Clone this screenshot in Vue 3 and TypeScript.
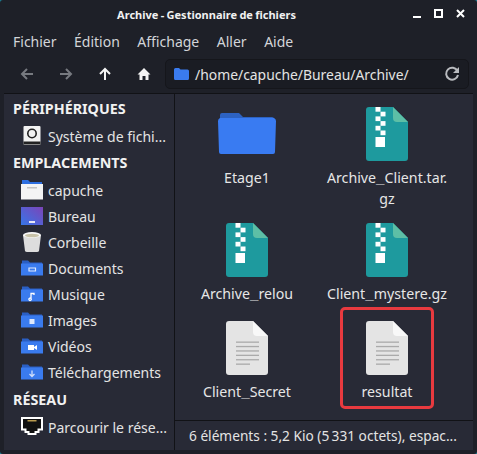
<script setup lang="ts">
interface Place { label: string; kind: string }
interface FileItem { lines: string[]; kind: 'folder' | 'zip' | 'text'; marked?: boolean }
const menus: string[] = ['Fichier', 'Édition', 'Affichage', 'Aller', 'Aide']
const places: Place[] = [
  { label: 'capuche', kind: 'home' },
  { label: 'Bureau', kind: 'desktop' },
  { label: 'Corbeille', kind: 'trash' },
  { label: 'Documents', kind: 'documents' },
  { label: 'Musique', kind: 'music' },
  { label: 'Images', kind: 'images' },
  { label: 'Vidéos', kind: 'videos' },
  { label: 'Téléchargements', kind: 'downloads' }
]
const files: FileItem[] = [
  { lines: ['Etage1'], kind: 'folder' },
  { lines: ['Archive_Client.tar.', 'gz'], kind: 'zip' },
  { lines: ['Archive_relou'], kind: 'zip' },
  { lines: ['Client_mystere.gz'], kind: 'zip' },
  { lines: ['Client_Secret'], kind: 'text' },
  { lines: ['resultat'], kind: 'text', marked: true }
]
const zipRows: number[] = [0, 1, 2, 3, 4, 5]
const textLines: number[] = [0, 1, 2, 3, 4, 5]
</script>

<template>
  <div class="window">
    <header class="titlebar">
      <span class="title">Archive - Gestionnaire de fichiers</span>
      <div class="controls">
        <svg width="10" height="10" viewBox="0 0 10 10"><rect x="1" y="7" width="8" height="2" fill="#fff" /></svg>
        <svg width="10" height="10" viewBox="0 0 10 10"><rect x="1" y="1" width="7" height="7" fill="none" stroke="#fff" stroke-width="2" /></svg>
        <svg width="10" height="10" viewBox="0 0 10 10"><path d="M1 1l7 7M8 1L1 8" stroke="#fff" stroke-width="2" /></svg>
      </div>
    </header>
    <nav class="menubar">
      <span v-for="m in menus" :key="m">{{ m }}</span>
    </nav>
    <div class="toolbar">
      <div class="navs">
        <svg width="14" height="14" viewBox="0 0 14 14"><path d="M13 7H2M7 2L2 7l5 5" fill="none" stroke="#777a80" stroke-width="2" /></svg>
        <svg width="14" height="14" viewBox="0 0 14 14"><path d="M1 7h11M7 2l5 5-5 5" fill="none" stroke="#777a80" stroke-width="2" /></svg>
        <svg width="14" height="14" viewBox="0 0 14 14"><path d="M7 13V2M2 7l5-5 5 5" fill="none" stroke="#f4f4f4" stroke-width="2" /></svg>
        <svg width="14" height="14" viewBox="0 0 14 14"><path d="M7 1L0.5 7.400H2.500V13H5.500V9H8.500V13H11.500V7.400H13.500Z" fill="#f4f4f4" /></svg>
      </div>
      <div class="pathbar">
        <svg width="15" height="12" viewBox="0 0 15 12"><path d="M0 1.500Q0 0 1.500 0H5L6.500 1.500H13.500Q15 1.500 15 3V10.500Q15 12 13.500 12H1.500Q0 12 0 10.500Z" fill="#3a7bee" /></svg>
        <span class="path">/home/capuche/Bureau/Archive/</span>
        <svg class="reload" width="16" height="16" viewBox="0 0 16 16"><path d="M13.500 5A6 6 0 1 0 14 9" fill="none" stroke="#b9bbbf" stroke-width="2" /><path d="M15 1v6H9z" fill="#b9bbbf" /></svg>
      </div>
    </div>
    <main class="body">
      <aside class="sidebar">
        <h3>PÉRIPHÉRIQUES</h3>
        <div class="place">
          <svg class="picon" width="22" height="20" viewBox="0 0 22 20">
            <rect x="2.500" y="0" width="17" height="19" rx="1" fill="#f2f2f2" />
            <rect x="2.500" y="15.500" width="17" height="3" fill="#222" />
            <circle cx="11" cy="7.500" r="4.200" fill="none" stroke="#222" stroke-width="1.600" />
          </svg>
          <span>Système de fichi...</span>
        </div>
        <h3>EMPLACEMENTS</h3>
        <div v-for="p in places" :key="p.label" class="place">
          <svg class="picon" width="22" height="20" viewBox="0 0 22 20">
            <template v-if="p.kind === 'home'">
              <path d="M1 0H7L9 2H21V6H1Z" fill="#2e6fe0" />
              <path d="M0 4H22V19.500H0Z" fill="#f4f4f4" />
              <rect x="6" y="7" width="10" height="1.500" fill="#c4c4c4" />
            </template>
            <template v-else-if="p.kind === 'desktop'">
              <defs>
                <linearGradient id="desk" x1="0" y1="1" x2="1" y2="0">
                  <stop offset="0" stop-color="#3676e8" />
                  <stop offset="1" stop-color="#7c44b8" />
                </linearGradient>
              </defs>
              <rect x="0" y="1" width="22" height="18" fill="url(#desk)" />
              <rect x="8" y="15" width="6" height="2" fill="#e8e8f4" />
            </template>
            <template v-else-if="p.kind === 'trash'">
              <path d="M2 3H20L18 19Q17.500 20 16 20H6Q4.500 20 4 19Z" fill="#ddd" />
              <ellipse cx="11" cy="3" rx="9" ry="3" fill="#f7f7f7" />
              <ellipse cx="11" cy="3.500" rx="7" ry="1.800" fill="#c8c2a8" />
            </template>
            <template v-else>
              <path d="M1 2.500H7L9 4.500H21V8H1Z" fill="#2a5fc4" />
              <path d="M0 5.500H22V17.500H0Z" fill="#3a7bee" />
              <path v-if="p.kind === 'documents'" d="M8 10H14.500V13H8Z" fill="none" stroke="#dfe9fc" stroke-width="1.200" />
              <path v-else-if="p.kind === 'music'" d="M10 14V9.500H13V11M10 14.500a1.200 1.200 0 1 1-.1-.1" fill="none" stroke="#fff" stroke-width="1.300" />
              <rect v-else-if="p.kind === 'images'" x="8.500" y="9" width="5" height="5" fill="#dfe9fc" />
              <path v-else-if="p.kind === 'videos'" d="M7 9H13V11L16 9V14L13 12V14H7Z" fill="#fff" />
              <path v-else d="M11 8.500V14M8.500 12L11 14.500 13.500 12" fill="none" stroke="#cfdefa" stroke-width="1.300" />
            </template>
          </svg>
          <span>{{ p.label }}</span>
        </div>
        <h3 class="network">RÉSEAU</h3>
        <div class="place">
          <svg class="picon" width="22" height="20" viewBox="0 0 22 20">
            <path d="M1 1H21V12.500H17.500V15H14.500V17H7.500V15H4.500V12.500H1Z" fill="#111" stroke="#fff" stroke-width="2" />
            <rect x="6.500" y="3" width="9" height="1.500" fill="#b89a4e" />
          </svg>
          <span>Parcourir le rése...</span>
        </div>
      </aside>
      <div class="right">
        <section class="content">
          <div class="grid">
            <div v-for="f in files" :key="f.lines[0]" class="file">
              <div class="glyph">
                <svg v-if="f.kind === 'folder'" width="58" height="42" viewBox="0 0 58 42">
                  <path d="M2 2Q2 0 4 0H21L25 4H54Q56 4 56 6V12H2Z" fill="#2d62c2" />
                  <path d="M0 8Q0 6 2 5H56Q58 6 58 8L57 39Q57 41 55 41H3Q1 41 1 39Z" fill="#397bf2" />
                </svg>
                <svg v-else-if="f.kind === 'zip'" width="42" height="54" viewBox="0 0 42 54">
                  <path d="M3 0H27L42 15V51Q42 54 39 54H3Q0 54 0 51V3Q0 0 3 0Z" fill="#1e9a9e" />
                  <path d="M27 0L42 15H31Q27 15 27 11Z" fill="#5dbfa6" />
                  <rect v-for="r in zipRows" :key="r" :x="r % 2 === 0 ? 9.500 : 14.500" :y="r * 4.700" width="5" height="4.700" fill="#fff" />
                  <rect x="9.500" y="30" width="9.500" height="10" fill="#fff" />
                </svg>
                <svg v-else width="42" height="54" viewBox="0 0 42 54">
                  <path d="M3 0H27L42 15V51Q42 54 39 54H3Q0 54 0 51V3Q0 0 3 0Z" fill="#e4e4e4" />
                  <path d="M27 0L42 15H31Q27 15 27 11Z" fill="#f8f8f8" />
                  <rect v-for="l in textLines" :key="l" x="10" :y="20.500 + l * 4.400" :width="l === 5 ? 14 : 23" height="1.300" fill="#aaaaaa" />
                </svg>
              </div>
              <div v-for="line in f.lines" :key="line" class="name"><template v-for="(part, i) in line.split('_')" :key="i"><span v-if="i > 0" class="us">_</span><span>{{ part }}</span></template></div>
              <div v-if="f.marked" class="mark"></div>
            </div>
          </div>
        </section>
        <footer class="status">6 éléments : 5,2 Kio (5&#8239;331 octets), espac...</footer>
      </div>
    </main>
  </div>
</template>

<style>
html, body { margin: 0; background: #1b7f95; }
</style>

<style scoped>
.window {
  width: 477px;
  height: 454px;
  box-sizing: border-box;
  display: flex;
  flex-direction: column;
  padding: 0 4px 4px;
  background: #1e2028;
  color: #e6e6e6;
  font-family: "Noto Sans", sans-serif;
  font-size: 14px;
  border-radius: 3px;
  overflow: hidden;
}
.titlebar {
  height: 28px;
  flex: none;
  position: relative;
  display: flex;
  align-items: center;
  justify-content: center;
  padding-right: 64px;
}
.title { font-size: 11px; font-weight: 700; color: #f1f1f1; word-spacing: -0.5px; }
.controls {
  position: absolute;
  right: 7px;
  top: 9px;
  display: flex;
  gap: 12px;
}
.menubar {
  height: 27px;
  flex: none;
  display: flex;
  align-items: center;
  gap: 17.500px;
  padding-left: 9px;
  font-size: 14px;
  color: #d3d5d9;
}
.toolbar {
  height: 38px;
  flex: none;
  display: flex;
  align-items: center;
  border-bottom: 1px solid #111216;
}
.navs {
  width: 161px;
  flex: none;
  box-sizing: border-box;
  display: flex;
  gap: 25px;
  padding-left: 16px;
}
.pathbar {
  flex: 1;
  margin-right: 4px;
  height: 30px;
  box-sizing: border-box;
  background: #1a1c23;
  border: 1px solid #15161b;
  border-radius: 5px;
  display: flex;
  align-items: center;
  padding: 0 8px;
  gap: 6px;
}
.path { flex: 1; font-size: 13.900px; color: #e4e4e4; }
.reload { flex: none; }
.body { flex: 1; min-height: 0; display: flex; }
.sidebar {
  width: 171px;
  flex: none;
  box-sizing: border-box;
  background: #282a36;
  border-right: 1px solid #111216;
  padding-top: 1px;
  overflow: hidden;
}
.sidebar h3 {
  margin: 0;
  height: 28px;
  line-height: 28px;
  padding-left: 9px;
  font-size: 14.300px;
  font-weight: 700;
  color: #f2f2f2;
}
.sidebar h3.network { margin-top: 1px; }
.place {
  height: 26px;
  display: flex;
  align-items: center;
  padding-left: 17px;
  font-size: 14px;
  color: #e4e4e4;
  white-space: nowrap;
}
.picon { flex: none; margin-right: 5px; }
.right { flex: 1; min-width: 0; display: flex; flex-direction: column; }
.content {
  flex: 1;
  min-height: 0;
  background: #282a36;
  padding: 13px 0 0 2px;
  border-bottom: 1px solid #111216;
}
.grid {
  display: grid;
  grid-template-columns: 140px 140px;
  grid-template-rows: 116px 98px 98px;
}
.file { position: relative; display: flex; flex-direction: column; align-items: center; }
.glyph { height: 54px; display: flex; align-items: center; justify-content: center; margin-bottom: 7px; }
.name {
  text-align: center;
  font-size: 14.200px;
  line-height: 20px;
  color: #e6e6e6;
  white-space: pre;
}
.us { font-family: "Liberation Mono", monospace; }
.mark {
  position: absolute;
  left: 23px;
  right: 23px;
  top: -14px;
  height: 102px;
  box-sizing: border-box;
  border: 3px solid #e83a3f;
  border-radius: 5px;
}
.status {
  height: 29px;
  flex: none;
  line-height: 29px;
  padding-left: 14px;
  font-size: 13.700px;
  color: #e4e4e4;
  white-space: nowrap;
  background: #282a36;
}
</style>
